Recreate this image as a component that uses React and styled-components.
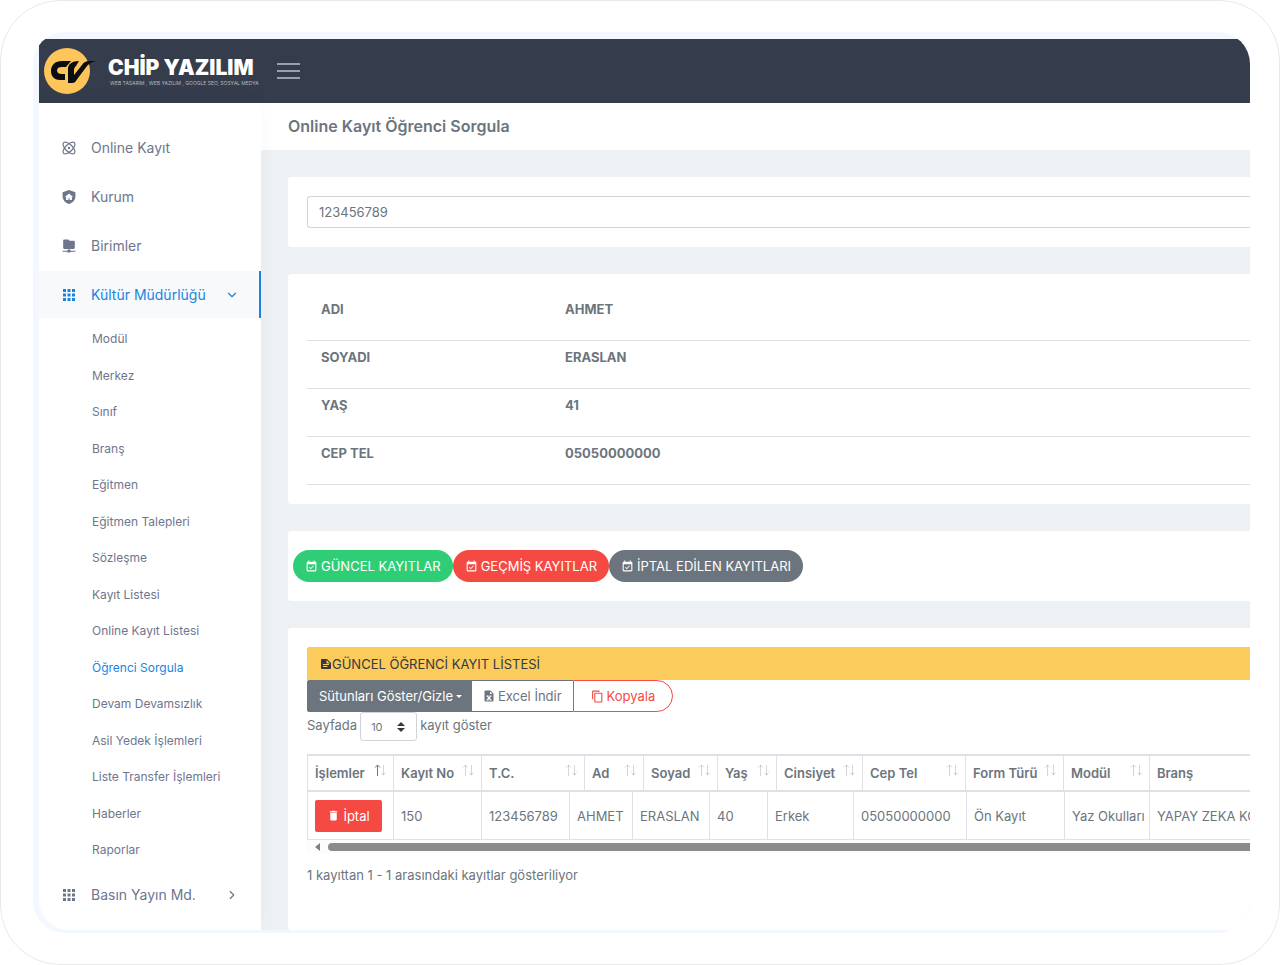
import React, { useState } from 'react';
import styled, { createGlobalStyle, css } from 'styled-components';
import {
  MdApps,
  MdContentCopy,
  MdDelete,
  MdEventAvailable,
} from 'react-icons/md';
import { FiChevronDown, FiChevronRight } from 'react-icons/fi';

const subItems = [
  'Modül',
  'Merkez',
  'Sınıf',
  'Branş',
  'Eğitmen',
  'Eğitmen Talepleri',
  'Sözleşme',
  'Kayıt Listesi',
  'Online Kayıt Listesi',
  'Öğrenci Sorgula',
  'Devam Devamsızlık',
  'Asil Yedek İşlemleri',
  'Liste Transfer İşlemleri',
  'Haberler',
  'Raporlar',
];

const student = [
  ['ADI', 'AHMET'],
  ['SOYADI', 'ERASLAN'],
  ['YAŞ', '41'],
  ['CEP TEL', '05050000000'],
];

const headCols = [
  ['İşlemler', 86],
  ['Kayıt No', 88],
  ['T.C.', 103],
  ['Ad', 59],
  ['Soyad', 74],
  ['Yaş', 59],
  ['Cinsiyet', 86],
  ['Cep Tel', 103],
  ['Form Türü', 98],
  ['Modül', 86],
  ['Branş', 190],
];

const bodyCols = [
  ['', 86],
  ['150', 88],
  ['123456789', 88],
  ['AHMET', 63],
  ['ERASLAN', 77],
  ['40', 58],
  ['Erkek', 86],
  ['05050000000', 113],
  ['Ön Kayıt', 98],
  ['Yaz Okulları', 85],
  ['YAPAY ZEKA KODLAMA', 190],
];

const AtomIcon = () => (
  <svg viewBox="0 0 24 24" fill="none" stroke="currentColor" strokeWidth="2">
    <ellipse cx="12" cy="12" rx="13" ry="6" transform="rotate(45 12 12)" />
    <ellipse cx="12" cy="12" rx="13" ry="6" transform="rotate(-45 12 12)" />
    <circle cx="12" cy="12" r="1" fill="currentColor" />
  </svg>
);

const ShieldHomeIcon = () => (
  <svg viewBox="0 0 24 24" fill="currentColor">
    <path d="M11 14h2v3h4v-5h2l-7-6-7 6h2v5h4v-3M12 0l11 4v7c0 5-4 11-11 13C5 22 1 16 1 11V4l11-4z" fillRule="evenodd" />
  </svg>
);

const FolderNetworkIcon = () => (
  <svg viewBox="0 0 24 24" fill="currentColor">
    <path d="M2 15V3a2 2 0 0 1 2-2h7l2 2h7a2 2 0 0 1 2 2v10a2 2 0 0 1-2 2h-7v2h1a1 1 0 0 1 1 1h8v2h-8a1 1 0 0 1-1 1h-4a1 1 0 0 1-1-1H1v-2h8a1 1 0 0 1 1-1h1v-2H4a2 2 0 0 1-2-2z" />
  </svg>
);

const DocumentIcon = () => (
  <svg width="12" height="12" viewBox="0 0 24 24" fill="currentColor" fillRule="evenodd">
    <path d="M4 2h10l8 8v10a2 2 0 0 1-2 2H4a2 2 0 0 1-2-2V4a2 2 0 0 1 2-2zM13 4v7h7zM6 12v2h12v-2zM6 16v2h9v-2z" />
  </svg>
);

const ExcelIcon = () => (
  <svg width="12" height="12" viewBox="0 0 24 24" fill="currentColor" fillRule="evenodd">
    <path d="M5 1h10l6 6v14a2 2 0 0 1-2 2H5a2 2 0 0 1-2-2V3a2 2 0 0 1 2-2zM14 3v5h5zM7 11v2h1l2 3-2 3H7v2h4v-2l1-1 1 1v2h4v-2h-1l-2-3 2-3h1v-2h-4v2l-1 1-1-1v-2z" />
  </svg>
);

const LogoMark = () => (
  <svg width="52" height="48" viewBox="0 0 52 48" aria-hidden="true">
    <circle cx="23" cy="24" r="23" fill="#fdc55a" />
    <g fill="#0b0d10">
      <path d="M27 14H18C11 14 7 18 7 24s4 9 9 9h5V27h-3c-3 0-5-1-5-3.500S15 20 18 20h4z" />
      <path d="M24 36V22c0-5 4-8 11-8l-3 5c-1 1-2 2-2 4v5l8-10c2-3 4-4 7-4h7c-5 1-7 3-9 5L34 31c-2 3-3 5-6 5z" />
    </g>
  </svg>
);

const SortArrows = ({ active }) => (
  <svg width="13" height="14" viewBox="0 0 13 14" fill="none" stroke="#6c757d">
    <path d="M3.5 13V2M1 4.5L3.5 2L6 4.5" opacity={active ? 1 : 0.3} />
    <path d="M9.5 2v10M7.5 9.5L9.5 12L11.5 9.5" opacity="0.3" />
  </svg>
);

function ResultTable() {
  return (
    <TableScroll>
      <HeadTable>
        <colgroup>
          {headCols.map(([name, w]) => (
            <Col key={name} $w={w} />
          ))}
        </colgroup>
        <thead>
          <tr>
            {headCols.map(([name], i) => (
              <th key={name} scope="col">
                <HeadCell>
                  {name}
                  <SortArrows active={i === 0} />
                </HeadCell>
              </th>
            ))}
          </tr>
        </thead>
      </HeadTable>
      <BodyTable>
        <colgroup>
          {bodyCols.map(([value, w]) => (
            <Col key={value} $w={w} />
          ))}
        </colgroup>
        <tbody>
          <tr>
            {bodyCols.map(([value], i) => (
              <td key={value}>
                {i === 0 ? (
                  <CancelButton type="button">
                    <MdDelete /> İptal
                  </CancelButton>
                ) : (
                  value
                )}
              </td>
            ))}
          </tr>
        </tbody>
      </BodyTable>
      <ScrollTrack>
        <ScrollArrow />
        <ScrollThumb />
      </ScrollTrack>
    </TableScroll>
  );
}

export default function App() {
  const [query, setQuery] = useState('123456789');

  return (
    <>
      <GlobalStyle />
      <Page>
        <Frame>
          <Screen>
            <Header>
              <Brand href="#">
                <LogoMark />
                <BrandText>
                  <BrandName>CHİP YAZILIM</BrandName>
                  <BrandTag>WEB TASARIM , WEB YAZILIM , GOOGLE SEO, SOSYAL MEDYA</BrandTag>
                </BrandText>
              </Brand>
              <MenuToggle type="button" aria-label="Menü">
                <span />
                <span />
                <span />
              </MenuToggle>
            </Header>
            <Body>
              <Sidebar>
                <NavLink href="#">
                  <AtomIcon />
                  Online Kayıt
                </NavLink>
                <NavLink href="#">
                  <ShieldHomeIcon />
                  Kurum
                </NavLink>
                <NavLink href="#">
                  <FolderNetworkIcon />
                  Birimler
                </NavLink>
                <NavLink href="#" $active>
                  <MdApps className="grid" />
                  Kültür Müdürlüğü
                  <FiChevronDown className="arrow" />
                </NavLink>
                <SubMenu>
                  {subItems.map((name) => (
                    <li key={name}>
                      <SubLink href="#" $active={name === 'Öğrenci Sorgula'}>
                        {name}
                      </SubLink>
                    </li>
                  ))}
                </SubMenu>
                <NavLink href="#">
                  <MdApps className="grid" />
                  Basın Yayın Md.
                  <FiChevronRight className="arrow" />
                </NavLink>
              </Sidebar>
              <Main>
                <TitleBar>
                  <h1>Online Kayıt Öğrenci Sorgula</h1>
                </TitleBar>
                <Cards>
                  <Card>
                    <SearchInput
                      aria-label="Kimlik No"
                      value={query}
                      onChange={(e) => setQuery(e.target.value)}
                    />
                  </Card>
                  <Card>
                    <InfoTable>
                      <tbody>
                        {student.map(([label, value]) => (
                          <tr key={label}>
                            <th scope="row">{label}</th>
                            <td>{value}</td>
                          </tr>
                        ))}
                      </tbody>
                    </InfoTable>
                  </Card>
                  <Card $tight>
                    <PillRow>
                      <Pill type="button" $bg="#2fce76">
                        <MdEventAvailable /> GÜNCEL KAYITLAR
                      </Pill>
                      <Pill type="button" $bg="#f44a43">
                        <MdEventAvailable /> GEÇMİŞ KAYITLAR
                      </Pill>
                      <Pill type="button" $bg="#6c757d">
                        <MdEventAvailable /> İPTAL EDİLEN KAYITLARI
                      </Pill>
                    </PillRow>
                  </Card>
                  <Card $grow>
                    <ListTitle>
                      <DocumentIcon />
                      GÜNCEL ÖĞRENCİ KAYIT LİSTESİ
                    </ListTitle>
                    <ToolGroup>
                      <ColumnsButton type="button">Sütunları Göster/Gizle</ColumnsButton>
                      <ExcelButton type="button">
                        <ExcelIcon /> Excel İndir
                      </ExcelButton>
                      <CopyButton type="button">
                        <MdContentCopy /> Kopyala
                      </CopyButton>
                    </ToolGroup>
                    <LengthLabel>
                      Sayfada
                      <SelectWrap>
                        <select defaultValue="10">
                          <option>10</option>
                          <option>25</option>
                          <option>50</option>
                        </select>
                        <svg width="8" height="10" viewBox="0 0 8 10" fill="#343a40">
                          <path d="M4 0l4 4H0zM4 10L0 6h8z" />
                        </svg>
                      </SelectWrap>
                      kayıt göster
                    </LengthLabel>
                    <ResultTable />
                    <TableInfo>1 kayıttan 1 - 1 arasındaki kayıtlar gösteriliyor</TableInfo>
                  </Card>
                </Cards>
              </Main>
            </Body>
          </Screen>
        </Frame>
      </Page>
    </>
  );
}

const GlobalStyle = createGlobalStyle`
  * {
    box-sizing: border-box;
  }
  body {
    margin: 0;
    background: #fff;
    color: #6c757d;
    font-family: Inter, "Liberation Sans", sans-serif;
    font-size: 13px;
    line-height: 20px;
  }
  button, input, select {
    font: inherit;
    color: inherit;
  }
  a {
    text-decoration: none;
  }
  svg {
    flex-shrink: 0;
  }
`;

const Page = styled.div`
  display: flex;
  min-height: 100vh;
  padding: 31px 29px 31px 32px;
  border: 1px solid #e9e9e9;
  border-radius: 60px;
`;

const Frame = styled.div`
  flex: 1;
  min-width: 0;
  display: flex;
  padding: 7px 0 3px 6px;
  border-radius: 32px;
  background: #f3f7ff;
  overflow: hidden;
`;

const Screen = styled.div`
  flex: 1;
  min-width: 0;
  display: flex;
  flex-direction: column;
  border-radius: 0 0 0 30px;
  background: #fff;
  overflow: hidden;
`;

const Header = styled.header`
  display: flex;
  align-items: center;
  height: 64px;
  background: #353c4b;
`;

const Brand = styled.a`
  display: flex;
  align-items: center;
  width: 222px;
  padding-left: 5px;
  color: #fff;
`;

const BrandText = styled.span`
  display: flex;
  flex-direction: column;
  padding-left: 12px;
  white-space: nowrap;
`;

const BrandName = styled.span`
  font-size: 21px;
  font-weight: 900;
  line-height: 24px;
`;

const BrandTag = styled.span`
  padding-left: 2px;
  color: #b4b8c0;
  font-size: 5px;
  line-height: 6px;
`;

const MenuToggle = styled.button`
  display: flex;
  flex-direction: column;
  gap: 5px;
  margin-left: 16px;
  padding: 0;
  border: 0;
  background: none;
  cursor: pointer;

  span {
    width: 23px;
    height: 2px;
    background: #9a9eae;
  }
`;

const Body = styled.div`
  flex: 1;
  display: flex;
`;

const Sidebar = styled.nav`
  flex: 0 0 222px;
  display: flex;
  flex-direction: column;
  gap: 2px;
  padding: 21px 0 11px;
  background: #fff;
  box-shadow: 0 0 20px rgba(50, 60, 80, 0.03);
  z-index: 1;
`;

const NavLink = styled.a`
  display: flex;
  align-items: center;
  gap: 15px;
  height: 47px;
  padding: 0 20px 0 23px;
  border-right: 2px solid transparent;
  color: #6e768e;
  font-size: 14px;

  svg {
    width: 14px;
    height: 14px;
  }
  .grid {
    width: 18px;
    height: 18px;
    margin: 0 -2px;
  }
  .arrow {
    margin-left: auto;
  }
  ${(props) =>
    props.$active &&
    css`
      border-right-color: #1b84e0;
      background: #f7f9fb;
      color: #1b84e0;
    `}
`;

const SubMenu = styled.ul`
  display: grid;
  grid-auto-rows: 37px 36px;
  margin: 0;
  padding: 1px 0 0;
  list-style: none;
`;

const SubLink = styled.a`
  display: block;
  padding: 8px 0 8px 53px;
  color: ${(props) => (props.$active ? '#1b84e0' : '#6e768e')};
  font-size: 12px;
`;

const Main = styled.main`
  flex: 1;
  min-width: 0;
  display: flex;
  flex-direction: column;
  background: #edf1f4;
`;

const TitleBar = styled.div`
  display: flex;
  align-items: center;
  height: 47px;
  padding: 0 0 2px 27px;
  background: #fff;

  h1 {
    margin: 0;
    font-size: 16px;
    font-weight: 600;
  }
`;

const Cards = styled.div`
  flex: 1;
  display: flex;
  flex-direction: column;
  gap: 27px;
  padding: 27px 0 0 27px;
`;

const Card = styled.section`
  flex: ${(props) => (props.$grow ? 1 : 'none')};
  padding: 19px 0 19px ${(props) => (props.$tight ? 5 : 19)}px;
  border-radius: 3px 0 0 3px;
  background: #fff;
`;

const SearchInput = styled.input`
  display: block;
  width: 100%;
  height: 32px;
  padding: 0 11px;
  border: 1px solid #ced4da;
  border-right: 0;
  border-radius: 3px 0 0 3px;
`;

const InfoTable = styled.table`
  width: 100%;
  border-spacing: 0;
  font-weight: 700;

  th,
  td {
    height: 48px;
    padding: 6px 14px;
    border-bottom: 1px solid #dee2e6;
    text-align: left;
    vertical-align: top;
  }
  th {
    width: 244px;
  }
`;

const PillRow = styled.div`
  display: flex;
`;

const Button = styled.button`
  display: flex;
  align-items: center;
  justify-content: center;
  gap: 3px;
  height: 32px;
  padding: 0 12px;
  border: 0;
  white-space: nowrap;
  cursor: pointer;
`;

const Pill = styled(Button)`
  border-radius: 16px;
  background: ${(props) => props.$bg};
  color: #fff;
`;

const ListTitle = styled.div`
  display: flex;
  align-items: center;
  height: 33px;
  padding-left: 13px;
  border-radius: 2px 0 0 0;
  background: #fbcb5c;
  color: #343a40;
`;

const ToolGroup = styled.div`
  display: flex;
`;

const ColumnsButton = styled(Button)`
  padding: 0 10px 0 12px;
  border-radius: 2px 0 0 2px;
  background: #6c757d;
  color: #fff;

  &::after {
    content: '';
    border: 3px solid transparent;
    border-top-color: #fff;
    border-bottom: 0;
  }
`;

const ExcelButton = styled(Button)`
  padding: 0 11px;
  border: 1px solid #6c757d;
  border-width: 1px 0;
  background: #fff;
`;

const CopyButton = styled(Button)`
  padding: 0 17px;
  border: 1px solid #f44a43;
  border-radius: 0 16px 16px 0;
  background: #fff;
  color: #f44a43;
`;

const LengthLabel = styled.label`
  display: flex;
  gap: 3px;
  line-height: 26px;
`;

const SelectWrap = styled.span`
  display: flex;
  align-items: center;
  width: 57px;
  height: 29px;
  padding: 0 11px 0 10px;
  border: 1px solid #ced4da;
  border-radius: 3px;

  select {
    flex: 1;
    appearance: none;
    padding: 0;
    border: 0;
    background: none;
    font-size: 11px;
  }
`;

const TableScroll = styled.div`
  margin-top: 13px;
  overflow: hidden;
`;

const Col = styled.col`
  width: ${(props) => props.$w}px;
`;

const Table = styled.table`
  width: 1032px;
  table-layout: fixed;
  border-collapse: separate;
  border-spacing: 0;
  border-left: 1px solid #dee2e6;
  white-space: nowrap;

  th,
  td {
    padding: 0 6px 0 7px;
    border-right: 1px solid #dee2e6;
    text-align: left;
  }
`;

const HeadTable = styled(Table)`
  border-top: 2px solid #dee2e6;
  border-bottom: 2px solid #dee2e6;

  th {
    height: 34px;
    font-weight: 600;
  }
`;

const HeadCell = styled.span`
  display: flex;
  justify-content: space-between;
`;

const BodyTable = styled(Table)`
  border-bottom: 1px solid #dee2e6;

  td {
    height: 47px;
  }
`;

const CancelButton = styled(Button)`
  width: 67px;
  border-radius: 2px;
  background: #f44a43;
  color: #fff;
`;

const ScrollTrack = styled.div`
  display: flex;
  align-items: center;
  gap: 8px;
  height: 14px;
  padding-left: 8px;
  background: #fcfcfc;
`;

const ScrollArrow = styled.span`
  border: 4px solid transparent;
  border-right: 5px solid #7f7f7f;
  border-left: 0;
`;

const ScrollThumb = styled.span`
  flex: 1;
  height: 8px;
  border-radius: 4px 0 0 4px;
  background: #8b8b8b;
`;

const TableInfo = styled.p`
  margin: 11px 0 0;
`;
